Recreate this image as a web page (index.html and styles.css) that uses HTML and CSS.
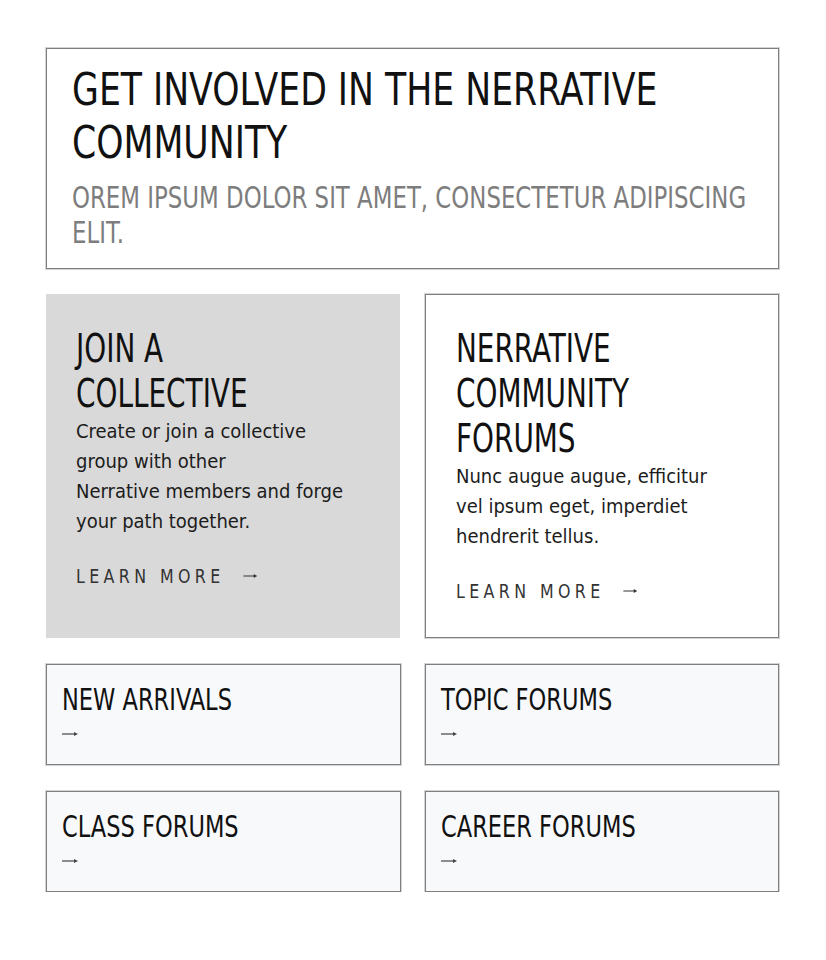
FILE: index.html
```html
<!DOCTYPE html>
<html lang="en">
<head>
<meta charset="utf-8">
<title>Get involved in the Nerrative community</title>
<link rel="stylesheet" href="styles.css">
</head>
<body>
<main class="page">
  <section class="hero">
    <h1 class="hero-title">GET INVOLVED IN THE NERRATIVE<br>COMMUNITY</h1>
    <p class="hero-sub">OREM IPSUM DOLOR SIT AMET, CONSECTETUR ADIPISCING<br>ELIT.</p>
  </section>

  <div class="features">
    <article class="feature feature--muted">
      <h2 class="feature-title">JOIN A<br>COLLECTIVE</h2>
      <p class="feature-text">Create or join a collective<br>group with other<br>Nerrative members and forge<br>your path together.</p>
      <a class="learn" href="#">LEARN MORE<svg class="learn-arrow" viewBox="0 0 16 8" aria-hidden="true"><path d="M0 4H13" stroke="currentColor" stroke-width="1.2"/><path d="M12 2L16 4L12 6Z" fill="currentColor"/></svg></a>
    </article>
    <article class="feature feature--outlined">
      <h2 class="feature-title">NERRATIVE<br>COMMUNITY<br>FORUMS</h2>
      <p class="feature-text">Nunc augue augue, efficitur<br>vel ipsum eget, imperdiet<br>hendrerit tellus.</p>
      <a class="learn" href="#">LEARN MORE<svg class="learn-arrow" viewBox="0 0 16 8" aria-hidden="true"><path d="M0 4H13" stroke="currentColor" stroke-width="1.2"/><path d="M12 2L16 4L12 6Z" fill="currentColor"/></svg></a>
    </article>
  </div>

  <nav class="links">
    <a class="link-box" href="#"><span class="link-title">NEW ARRIVALS</span><svg class="link-arrow" viewBox="0 0 16 8" aria-hidden="true"><path d="M0 4H13" stroke="currentColor" stroke-width="1.2"/><path d="M12 2L16 4L12 6Z" fill="currentColor"/></svg></a>
    <a class="link-box" href="#"><span class="link-title">TOPIC FORUMS</span><svg class="link-arrow" viewBox="0 0 16 8" aria-hidden="true"><path d="M0 4H13" stroke="currentColor" stroke-width="1.2"/><path d="M12 2L16 4L12 6Z" fill="currentColor"/></svg></a>
    <a class="link-box" href="#"><span class="link-title">CLASS FORUMS</span><svg class="link-arrow" viewBox="0 0 16 8" aria-hidden="true"><path d="M0 4H13" stroke="currentColor" stroke-width="1.2"/><path d="M12 2L16 4L12 6Z" fill="currentColor"/></svg></a>
    <a class="link-box" href="#"><span class="link-title">CAREER FORUMS</span><svg class="link-arrow" viewBox="0 0 16 8" aria-hidden="true"><path d="M0 4H13" stroke="currentColor" stroke-width="1.2"/><path d="M12 2L16 4L12 6Z" fill="currentColor"/></svg></a>
  </nav>
</main>
</body>
</html>
```

FILE: styles.css
```css
* { box-sizing: border-box; }

body {
  margin: 0;
  background: #ffffff;
  color: #111111;
  font-family: "DejaVu Sans Condensed", "Liberation Sans", sans-serif;
}

.page {
  width: 733px;
  margin: 48px 0 0 46px;
  display: flex;
  flex-direction: column;
  gap: 25px;
}

.hero {
  border: 1px solid #7f7f7f;
  box-shadow: 0 0 0 1px #d4d4d4;
  padding: 14px 25px 18px;
}

.hero-title {
  margin: 0;
  font-size: 44px;
  line-height: 53px;
  font-weight: 400;
  color: #111111;
  white-space: nowrap;
  transform: scaleX(0.876);
  transform-origin: left top;
}

.hero-sub {
  margin: 11px 0 0;
  font-size: 30px;
  line-height: 35px;
  color: #7d7d7d;
  white-space: nowrap;
  transform: scaleX(0.847);
  transform-origin: left top;
}

.features {
  display: grid;
  grid-template-columns: 1fr 1fr;
  column-gap: 25px;
}

.feature {
  display: flex;
  flex-direction: column;
  align-items: flex-start;
  padding: 32px 30px 35px;
}

.feature--muted {
  background: #d9d9d9;
}

.feature--outlined {
  border: 1px solid #7f7f7f;
  box-shadow: 0 0 0 1px #d4d4d4;
  padding: 31px 30px 34px;
}

.feature-title {
  margin: 0;
  font-size: 39px;
  line-height: 45px;
  font-weight: 400;
  color: #111111;
  white-space: nowrap;
  transform: scaleX(0.795);
  transform-origin: left top;
}

.feature-text {
  margin: 0;
  font-size: 20px;
  line-height: 30px;
  color: #1c1c1c;
  white-space: nowrap;
}

.learn {
  display: flex;
  align-items: center;
  margin-top: 28px;
  font-size: 20px;
  line-height: 24px;
  letter-spacing: 5px;
  color: #333333;
  text-decoration: none;
  white-space: nowrap;
  transform: scaleX(0.88);
  transform-origin: left center;
}

.learn-arrow {
  width: 16px;
  height: 8px;
  margin-left: 21px;
}

.links {
  display: grid;
  grid-template-columns: 1fr 1fr;
  column-gap: 24px;
  row-gap: 26px;
  margin-top: 1px;
}

.link-box {
  display: flex;
  flex-direction: column;
  align-items: flex-start;
  height: 101px;
  padding: 17px 15px 0;
  background: #f8f9fb;
  border: 1px solid #7f7f7f;
  box-shadow: 0 0 0 1px #d4d4d4;
  color: #111111;
  text-decoration: none;
}

.link-title {
  font-size: 30px;
  line-height: 36px;
  white-space: nowrap;
  transform: scaleX(0.835);
  transform-origin: left top;
}

.link-arrow {
  width: 16px;
  height: 8px;
  margin-top: 12px;
  color: #444444;
}
```
